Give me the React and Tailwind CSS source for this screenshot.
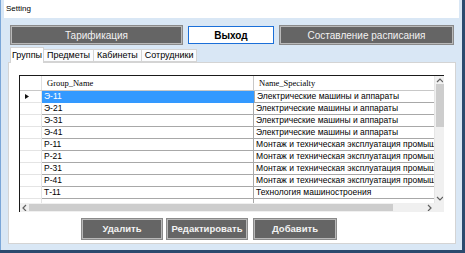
import React from "react";

const groups = [
  { name: "Э-11", spec: "Электрические машины и аппараты" },
  { name: "Э-21", spec: "Электрические машины и аппараты" },
  { name: "Э-31", spec: "Электрические машины и аппараты" },
  { name: "Э-41", spec: "Электрические машины и аппараты" },
  { name: "Р-11", spec: "Монтаж и техническая эксплуатация промышленного оборудования" },
  { name: "Р-21", spec: "Монтаж и техническая эксплуатация промышленного оборудования" },
  { name: "Р-31", spec: "Монтаж и техническая эксплуатация промышленного оборудования" },
  { name: "Р-41", spec: "Монтаж и техническая эксплуатация промышленного оборудования" },
  { name: "Т-11", spec: "Технология машиностроения" },
];

const tabs = ["Предметы", "Кабинеты", "Сотрудники"];

function Chevron({ dir }) {
  const paths = {
    up: "M1 5 L4 2 L7 5",
    down: "M1 2 L4 5 L7 2",
    left: "M5 1 L2 4 L5 7",
    right: "M2 1 L5 4 L2 7",
  };
  return (
    <svg width="7" height="7" viewBox="0 0 7 7" fill="none">
      <path d={paths[dir]} stroke="#606060" strokeWidth="1.2" />
    </svg>
  );
}

function GrayButton({ children, className }) {
  return (
    <button
      className={`h-full bg-[#656565] border border-[#b9b9b9] outline outline-1 outline-[#8a8a8a] text-[#f2f2f2] flex items-center justify-center ${className}`}
    >
      {children}
    </button>
  );
}

export default function App() {
  return (
    <div
      className="w-[465px] h-[253px] bg-[#2b4a6e] overflow-hidden"
      style={{ fontFamily: '"Liberation Sans", Arial, sans-serif' }}
    >
      <div className="w-[462px] h-[250px] bg-[#d9e7f5] border-l border-[#7aa6d8] flex flex-col">
        {/* TITLE BAR */}
        <div className="h-[18px] mx-[3px] bg-white flex items-center pl-[2px] text-[8px] text-black">
          Setting
        </div>

        {/* TOP BUTTONS */}
        <div className="h-[18px] mt-[8px] ml-[10px] flex gap-[6px] text-[10px]">
          <GrayButton className="w-[171px]">Тарификация</GrayButton>
          <button className="w-[86px] h-full bg-white border border-[#1b6fd8] font-bold text-black flex items-center justify-center">
            Выход
          </button>
          <GrayButton className="w-[173px]">Составление расписания</GrayButton>
        </div>

        {/* TABS */}
        <div className="mt-[3px] ml-[7px] flex flex-col">
          <div className="h-[15px] flex items-end pl-[2px] text-[9px] text-black">
            <div className="h-[16px] w-[34px] bg-white border border-b-0 border-[#d4d4d4] flex items-center justify-center relative z-10 -mb-[1px]">
              Группы
            </div>
            {tabs.map((t) => (
              <div
                key={t}
                className="h-[13px] px-[3px] bg-[#fbfcfe] border border-l-0 border-[#d4d4d4] flex items-center"
              >
                {t}
              </div>
            ))}
          </div>

          {/* TAB PAGE */}
          <div className="w-[448px] h-[182px] bg-white border border-[#d4d4d4] flex flex-col">
            {/* DATA GRID */}
            <div className="ml-[10px] mt-[12px] w-[425px] h-[137px] border-l border-t border-[#1a1a1a] flex flex-col">
              <div className="flex h-[127px]">
                <div className="w-[414px] flex flex-col overflow-hidden">
                  {/* HEADER */}
                  <div
                    className="h-[15px] flex shrink-0 text-[8.5px] text-black border-b border-[#c8c8c8]"
                    style={{ fontFamily: '"Liberation Serif", "Times New Roman", serif' }}
                  >
                    <div className="w-[22px] shrink-0 border-r border-[#e0e0e0]" />
                    <div className="w-[212px] shrink-0 pl-[5px] flex items-center border-r border-[#c8c8c8]">
                      Group_Name
                    </div>
                    <div className="w-[180px] shrink-0 pl-[5px] flex items-center">
                      Name_Specialty
                    </div>
                  </div>

                  {/* ROWS */}
                  {groups.map((g, i) => {
                    const sel = i === 0;
                    return (
                      <div key={g.name} className="h-[12px] flex shrink-0 text-[8.5px]">
                        <div className="w-[22px] shrink-0 flex items-center pl-[5px] border-r border-b border-[#e4e4e4]">
                          {sel && (
                            <svg width="4" height="5" viewBox="0 0 4 5">
                              <path d="M0 0 L4 2.5 L0 5 Z" fill="#111" />
                            </svg>
                          )}
                        </div>
                        <div
                          className={`w-[212px] shrink-0 pl-[2px] flex items-center border-b ${
                            sel
                              ? "bg-[#3399ff] text-white border-[#3399ff]"
                              : "text-black border-r border-[#a8a8a8]"
                          }`}
                        >
                          {g.name}
                        </div>
                        <div
                          className={`w-[180px] shrink-0 pl-[2px] flex items-center whitespace-nowrap overflow-hidden text-black border-b border-[#a8a8a8] ${
                            sel ? "border-l border-l-[#a8a8a8]" : ""
                          }`}
                        >
                          {g.spec}
                        </div>
                      </div>
                    );
                  })}
                  <div className="h-[4px] flex shrink-0">
                    <div className="w-[22px] border-r border-[#e4e4e4]" />
                    <div className="w-[212px] border-r border-[#a8a8a8]" />
                  </div>
                </div>

                {/* VERTICAL SCROLLBAR */}
                <div className="w-[10px] bg-[#f0f0f0] border-l border-[#e6e6e6] flex flex-col items-center">
                  <div className="h-[8px] flex items-center justify-center">
                    <Chevron dir="up" />
                  </div>
                  <div className="w-[8px] h-[43px] bg-[#cdcdcd]" />
                  <div className="flex-1" />
                  <div className="h-[9px] flex items-center justify-center">
                    <Chevron dir="down" />
                  </div>
                </div>
              </div>

              {/* HORIZONTAL SCROLLBAR */}
              <div className="flex h-[9px]">
                <div className="w-[414px] bg-[#f0f0f0] flex items-center">
                  <div className="w-[9px] flex items-center justify-center">
                    <Chevron dir="left" />
                  </div>
                  <div className="w-[364px] h-[7px] bg-[#cdcdcd]" />
                  <div className="flex-1" />
                  <div className="w-[9px] flex items-center justify-center">
                    <Chevron dir="right" />
                  </div>
                </div>
                <div className="w-[10px] bg-[#f0f0f0]" />
              </div>
            </div>

            {/* BOTTOM BUTTONS */}
            <div className="h-[20px] mt-[7px] ml-[73px] flex gap-[5px] text-[9.5px] font-bold">
              <GrayButton className="w-[80px]">Удалить</GrayButton>
              <GrayButton className="w-[80px]">Редактировать</GrayButton>
              <GrayButton className="w-[82px] ml-[2px]">Добавить</GrayButton>
            </div>
          </div>
        </div>
      </div>
    </div>
  );
}
